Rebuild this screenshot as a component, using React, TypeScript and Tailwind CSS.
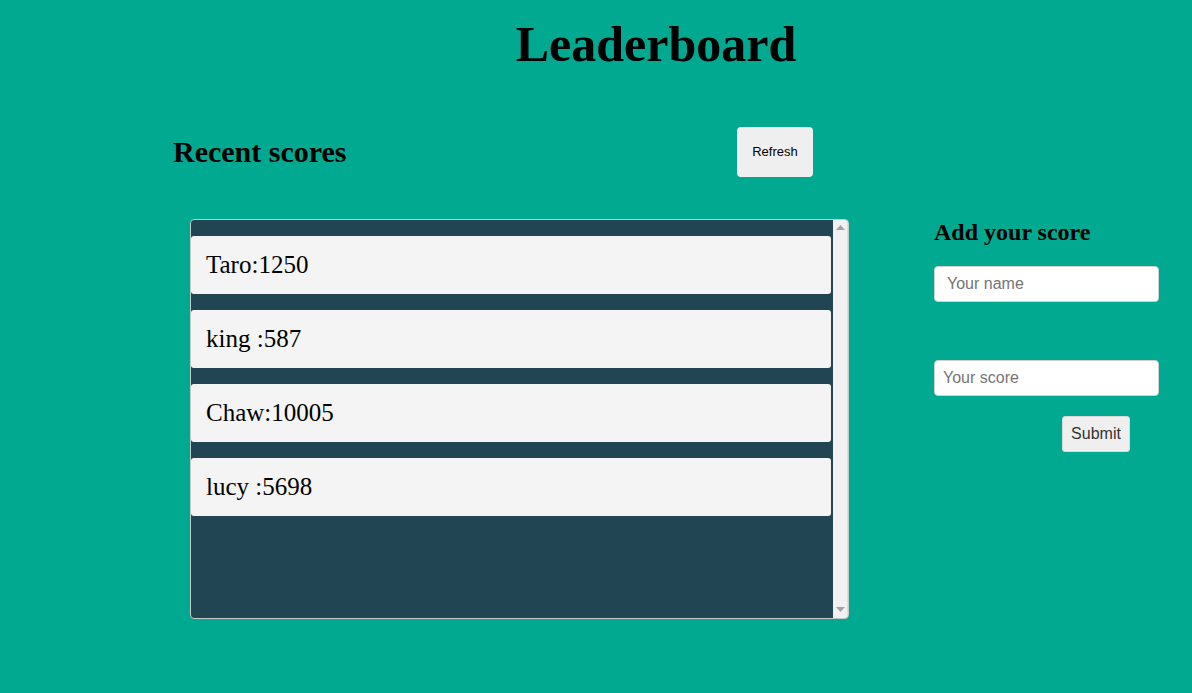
import React from "react";

const scores = [
  { name: "Taro", score: "1250" },
  { name: "king ", score: "587" },
  { name: "Chaw", score: "10005" },
  { name: "lucy ", score: "5698" },
];

export default function App() {
  return (
    <div className="min-h-screen w-full bg-[#00a98f] text-black" style={{ fontFamily: '"Liberation Serif", serif' }}>
      <h1 className="pl-[120px] pt-[14px] h-[74px] text-center text-[50px] leading-[60px] font-bold">Leaderboard</h1>
      <div className="flex items-start mt-[53px]">
        <section className="ml-[173px] w-[676px]">
          <div className="flex w-[640px] items-center justify-between h-[50px]">
            <h2 className="text-[30px] font-bold leading-[34px]">Recent scores</h2>
            <button
              className="w-[76px] h-[50px] rounded-[4px] bg-[#efefef] text-[13px] text-black"
              style={{ fontFamily: '"Liberation Sans", Arial, sans-serif' }}
            >
              Refresh
            </button>
          </div>
          <div className="ml-[17px] mt-[42px] w-[659px] h-[400px] rounded-[4px] border border-[#c8c8c8] bg-[#224553] flex overflow-hidden">
            <ul className="flex-1 flex flex-col gap-[16px] pt-[16px]">
              {scores.map((s) => (
                <li
                  key={s.name}
                  className="mr-[2px] h-[58px] rounded-[3px] bg-[#f4f4f4] px-[15px] flex items-center text-[25px] whitespace-pre"
                >
                  {s.name}:{s.score}
                </li>
              ))}
            </ul>
            <div className="w-[15px] bg-[#f1f1f1] flex flex-col justify-between items-center py-[4px] border-r border-[#dcdcdc]">
              <svg width="9" height="6" viewBox="0 0 9 6" className="mt-[1px]">
                <polygon points="4.5,0 9,5 0,5" fill="#a3a3a3" />
              </svg>
              <svg width="9" height="6" viewBox="0 0 9 6" className="mb-[1px]">
                <polygon points="0,0 9,0 4.5,5" fill="#a3a3a3" />
              </svg>
            </div>
          </div>
        </section>
        <aside className="ml-[85px] mt-[92px] w-[225px] flex flex-col">
          <h3 className="text-[24px] font-bold leading-[26px] h-[26px]">Add your score</h3>
          <input
            placeholder="Your name"
            className="mt-[21px] h-[36px] w-[225px] rounded-[4px] border border-[#d0d0d0] bg-white pl-[12px] text-[16px] placeholder:text-[#757575] outline-none"
            style={{ fontFamily: '"Liberation Sans", Arial, sans-serif' }}
          />
          <input
            placeholder="Your score"
            className="mt-[58px] h-[36px] w-[225px] rounded-[4px] border border-[#d0d0d0] bg-white pl-[8px] text-[16px] placeholder:text-[#757575] outline-none"
            style={{ fontFamily: '"Liberation Sans", Arial, sans-serif' }}
          />
          <button
            className="mt-[20px] ml-[128px] w-[68px] h-[36px] rounded-[3px] border border-[#dadada] bg-[#efefef] text-[16px] text-[#333]"
            style={{ fontFamily: '"Liberation Sans", Arial, sans-serif' }}
          >
            Submit
          </button>
        </aside>
      </div>
    </div>
  );
}
